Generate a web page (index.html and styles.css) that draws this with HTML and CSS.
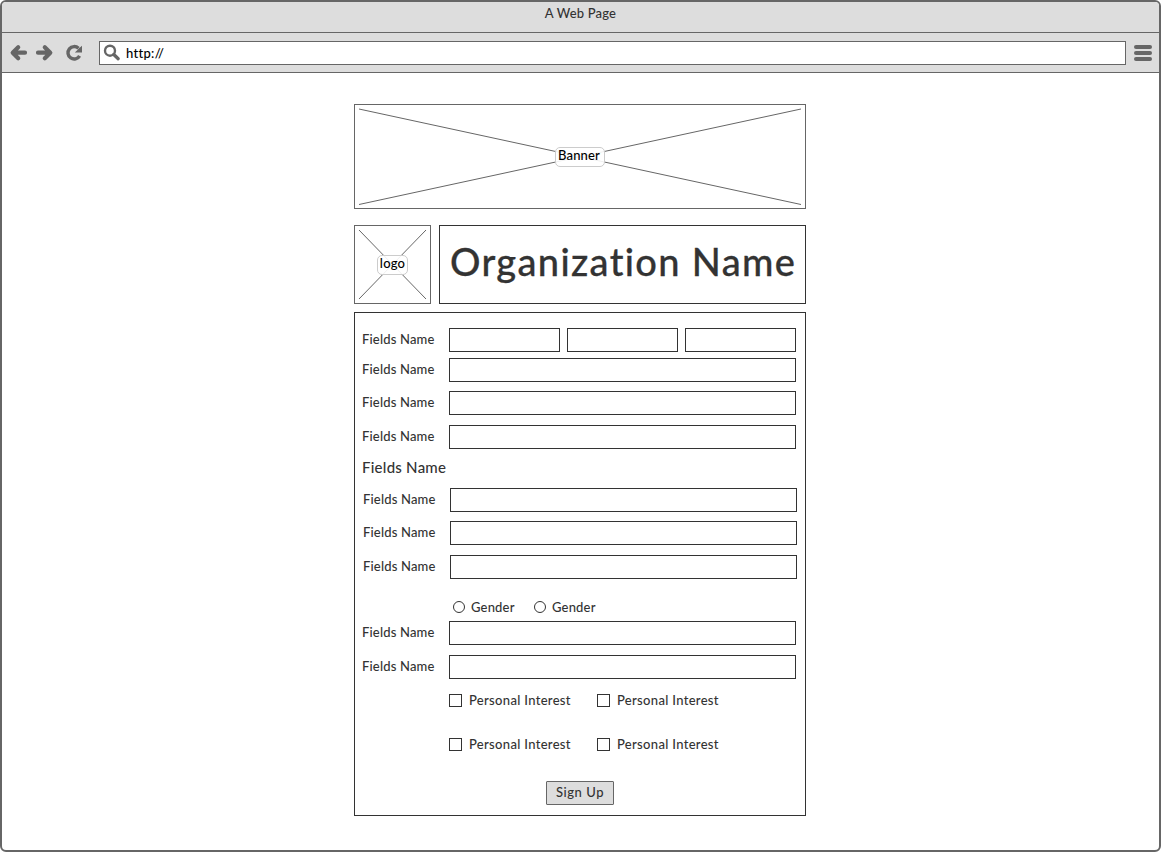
FILE: index.html
```html
<!DOCTYPE html>
<html lang="en">
<head>
<meta charset="utf-8">
<title>A Web Page</title>
<link rel="stylesheet" href="styles.css">
</head>
<body>
<div class="window">
  <header class="titlebar"><span class="t-page">A Web Page</span></header>
  <nav class="toolbar">
    <svg class="nav-icons" width="76" height="20" viewBox="0 0 76 20">
      <g fill="none" stroke="#666" stroke-width="4.200" stroke-linecap="round" stroke-linejoin="round">
        <path d="M10.200 4.200 L4.700 9.700 L10.200 15.200 M5.500 9.700 H17"/>
        <path d="M36.800 4.200 L42.300 9.700 L36.800 15.200 M41.500 9.700 H30"/>
      </g>
      <path d="M70.500 5.300 A6.200 6.200 0 1 0 71.600 12.800" fill="none" stroke="#666" stroke-width="3.400"/>
      <path d="M74 2.800 V9.400 H66.800 L69.200 7.200 L71 5.300 Z" fill="#666"/>
    </svg>
    <div class="address">
      <svg width="18" height="18" viewBox="0 0 18 18" fill="none" stroke="#666">
        <circle cx="7" cy="6.700" r="5" stroke-width="2.400"/>
        <path d="M10.800 10.500 L15.200 14.700" stroke-width="3.300" stroke-linecap="round"/>
      </svg>
      <span class="t-url">http://</span>
    </div>
    <div class="menu"><i></i><i></i><i></i></div>
  </nav>
  <main class="page">
    <section class="placeholder banner">
      <svg class="cross" width="450" height="103" viewBox="0 0 450 103"><path d="M4 4 L446 99.500 M4 99.500 L446 4"/></svg>
      <span class="tag t-banner">Banner</span>
    </section>
    <section class="brand">
      <div class="placeholder logo">
        <svg class="cross" width="75" height="77" viewBox="0 0 75 77"><path d="M4 4 L71 73 M4 73 L71 4"/></svg>
        <span class="tag t-logo">logo</span>
      </div>
      <h1 class="org"><span class="t-org">Organization Name</span></h1>
    </section>
    <form class="form">
      <div class="row"><label>Fields Name</label><div class="field"></div><div class="field"></div><div class="field"></div></div>
      <div class="row gap-6"><label>Fields Name</label><div class="field"></div></div>
      <div class="row gap-9"><label>Fields Name</label><div class="field"></div></div>
      <div class="row gap-10"><label>Fields Name</label><div class="field"></div></div>
      <h2 class="subhead"><span>Fields Name</span></h2>
      <div class="row shifted"><label>Fields Name</label><div class="field"></div></div>
      <div class="row shifted gap-9"><label>Fields Name</label><div class="field"></div></div>
      <div class="row shifted gap-10"><label>Fields Name</label><div class="field"></div></div>
      <div class="genders">
        <span class="radio"></span><span class="t-gender">Gender</span>
        <span class="radio"></span><span class="t-gender">Gender</span>
      </div>
      <div class="row"><label>Fields Name</label><div class="field"></div></div>
      <div class="row gap-10"><label>Fields Name</label><div class="field"></div></div>
      <div class="interests">
        <div class="option"><span class="check"></span><span class="t-interest">Personal Interest</span></div>
        <div class="option"><span class="check"></span><span class="t-interest">Personal Interest</span></div>
        <div class="option"><span class="check"></span><span class="t-interest">Personal Interest</span></div>
        <div class="option"><span class="check"></span><span class="t-interest">Personal Interest</span></div>
      </div>
      <button class="submit" type="button"><span>Sign Up</span></button>
    </form>
  </main>
</div>
</body>
</html>
```
FILE: styles.css
```css
* { box-sizing: border-box; }
body {
  margin: 0;
  background: #fff;
  color: #333;
  font: 500 13px/16px Lato, "Open Sans", sans-serif;
  letter-spacing: 0.180px;
}
span, label { white-space: nowrap; }
.window {
  height: 852px;
  border: 2px solid #666;
  border-radius: 6px;
  overflow: hidden;
}
.titlebar {
  height: 31px;
  padding-top: 3px;
  background: #ddd;
  border-bottom: 1px solid #666;
  text-align: center;
}
.toolbar {
  display: flex;
  align-items: center;
  height: 40px;
  padding: 0 7px 0 6px;
  background: #ddd;
  border-bottom: 1px solid #666;
}
.nav-icons { margin-right: 15px; }
.address {
  display: flex;
  align-items: center;
  gap: 5px;
  flex: 1;
  height: 24px;
  padding-left: 3px;
  background: #fff;
  border: 1px solid #666;
}
.t-url { color: #000; letter-spacing: 0.300px; }
.menu {
  display: flex;
  flex-direction: column;
  gap: 2px;
  width: 18px;
  margin-left: 8px;
}
.menu i { height: 4px; background: #666; border-radius: 2px; }
.page { width: 452px; margin: 31px 0 0 352px; }
.placeholder {
  display: flex;
  align-items: center;
  justify-content: center;
  position: relative;
  border: 1px solid #666;
}
.cross {
  position: absolute;
  inset: 0;
  fill: none;
  stroke: #666;
}
.tag {
  position: relative;
  height: 20px;
  line-height: 15px;
  text-align: center;
  color: #000;
  background: rgba(255, 255, 255, 0.9);
  border: 1px solid #ccc;
  border-radius: 5px;
}
.banner { height: 105px; }
.t-banner { width: 50px; padding-right: 2px; }
.t-logo { width: 31px; }
.brand { display: flex; gap: 8px; margin: 16px 0 8px; }
.logo { width: 77px; height: 79px; }
.org {
  flex: 1;
  margin: 0;
  padding: 11px 0 0 10px;
  border: 1px solid #333;
  font-size: 38px;
  line-height: 48px;
  font-weight: 500;
  letter-spacing: 1.330px;
  -webkit-text-stroke: 0.300px currentColor;
}
.form {
  height: 504px;
  padding: 15px 9px 0 7px;
  border: 1px solid #333;
}
.row { display: flex; gap: 7px; height: 24px; }
.row label { width: 80px; line-height: 22px; }
.field { flex: 1; border: 1px solid #333; }
.shifted { margin-left: 1px; margin-right: -1px; }
.gap-6 { margin-top: 6px; }
.gap-9 { margin-top: 9px; }
.gap-10 { margin-top: 10px; }
.subhead {
  height: 39px;
  margin: 0;
  font-size: 15px;
  line-height: 37px;
  font-weight: 500;
  letter-spacing: 0.250px;
}
.genders {
  display: flex;
  align-items: center;
  height: 24px;
  margin: 16px 0 2px 91px;
}
.radio {
  width: 12px;
  height: 12px;
  margin-right: 6px;
  border: 1px solid #333;
  border-radius: 50%;
}
.t-gender { width: 63px; }
.interests {
  display: grid;
  grid-template-columns: 148px 148px;
  row-gap: 28px;
  margin: 13px 0 0 87px;
}
.option { display: flex; align-items: center; gap: 7px; height: 16px; }
.t-interest { letter-spacing: 0.320px; }
.check { width: 13px; height: 13px; border: 1px solid #333; }
.submit {
  display: block;
  width: 68px;
  height: 24px;
  margin: 29px 0 0 184px;
  padding: 0;
  color: #333;
  background: #ddd;
  border: 1px solid #666;
  border-radius: 1px;
  font: inherit;
  letter-spacing: 0.550px;
}
.submit span { display: block; height: 20px; line-height: 18px; }
```
